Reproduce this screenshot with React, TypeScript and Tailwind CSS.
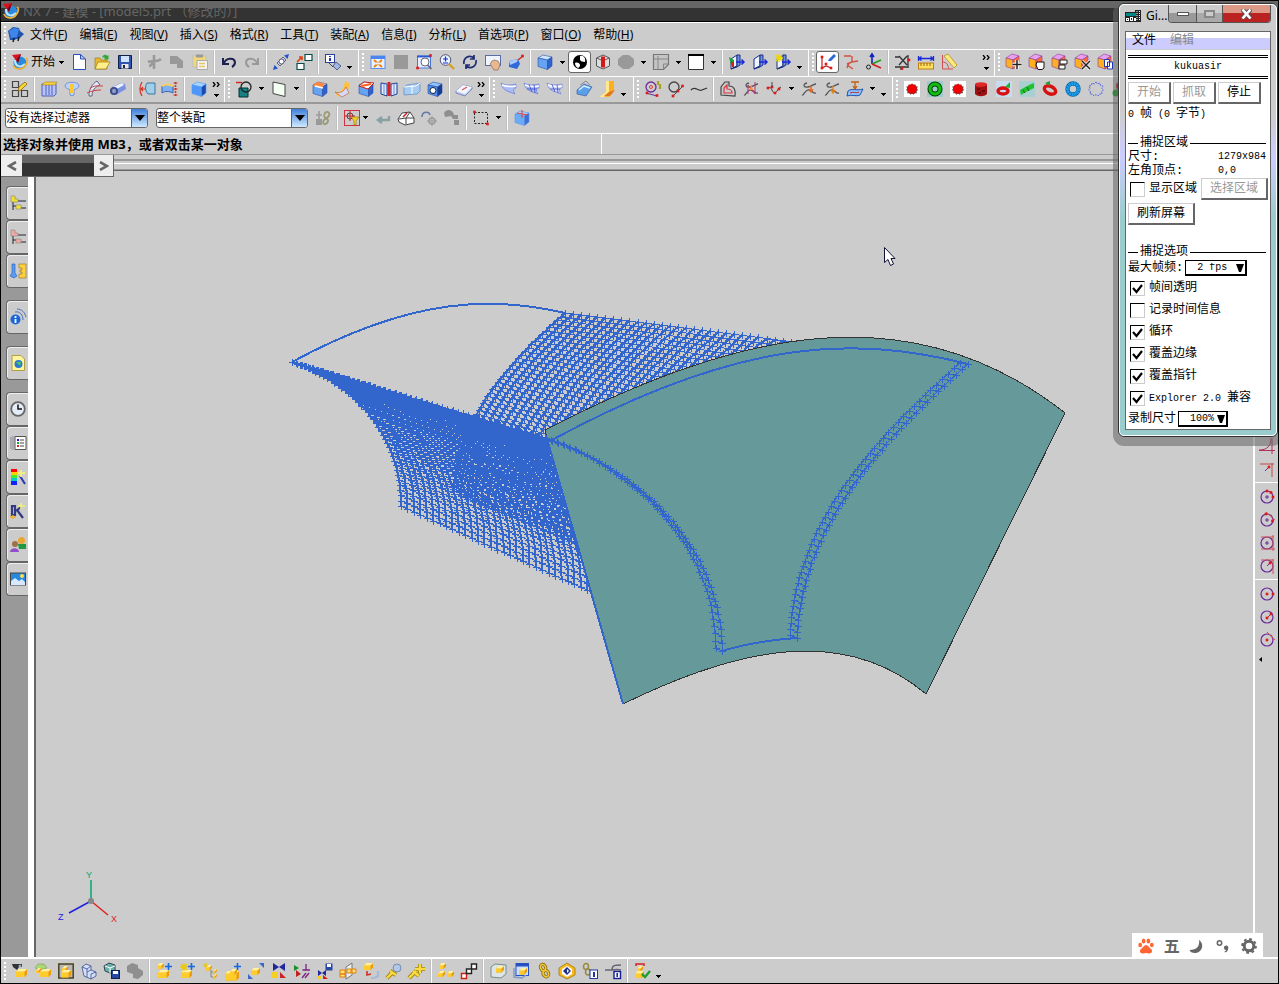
import type { ReactNode } from "react";
import clsx from "clsx";

function Cube({ t = "#cce6ff", l = "#66a3f0", r = "#2f62cc", s = "#2b4fa8" }) {
  return (
    <g stroke={s} strokeWidth=".6" strokeLinejoin="round">
      <path d="M1 4 6 1l9 2-4.500 3z" fill={t} />
      <path d="M1 4l9.500 2v9.500L1 12.500z" fill={l} />
      <path d="M10.500 6 15 3v9l-4.500 3.500z" fill={r} />
    </g>
  );
}

function Gold({ x = 0, y = 0, w = 9 }) {
  const h = w * 0.5;
  return (
    <g transform={`translate(${x} ${y})`}>
      <path d={`M0 2.500 2.500 0H${w}v${h}l-2.500 2.500H0z`} fill="#e89c10" />
      <path d={`M0 2.500h${w - 2.5}v${h}H0z`} fill="#ffcc2c" />
      <path d={`M0 2.500 2.500 0H${w}l-2.500 2.500z`} fill="#fff3a0" />
    </g>
  );
}

function Surface({ a = "#a9bcf5", lines = false }) {
  return (
    <g>
      <path d="M0 2c5 3 10 2 15 1v4c-3 0-3 3-1 6L6 10C4 9 1 7 0 2z" fill={a} stroke="#6a7ad8" strokeWidth=".7" />
      <path d="M1 4c5 2 9 2 14 1" stroke="#fff" strokeWidth="1.500" fill="none" />
      {lines && <path d="M5 3.500l3 7.500M10 3.500l1 8.500M3 8h10" stroke="#3b4bc0" strokeWidth=".8" fill="none" />}
    </g>
  );
}

const plus = <path d="M12.500 0v7M9 3.500h7" stroke="#1668e0" strokeWidth="1.600" />;
const reds = (pts: number[][]) => pts.map(([x, y]) => <rect key={`${x},${y}`} x={x - 1.3} y={y - 1.3} width="2.600" height="2.600" fill="#e01818" />);
const spline = <path d="M6 2C1 3 3 7 7 6s6-3 8-3M1 14c2 1 3-6 7-5s4 4 7 3" fill="none" stroke="#555" strokeWidth="1.300" />;
const moveCube = (
  <g stroke="#8a3a9a" strokeWidth=".6">
    <path d="M0 4 6 0l7 2-6 4z" fill="#e8a0f0" />
    <path d="M0 4l7 2v9l-7-2.500z" fill="#ffb020" />
    <path d="M7 6l6-4v9l-6 4z" fill="#ff6a3c" />
  </g>
);
const door = (
  <g stroke="#1b2f80" strokeWidth="1">
    <path d="M2 5l6-4v11l-6 3z" fill="#eef3ff" />
    <path d="M8 1h3v10l-3 2-6 2 6-3z" fill="#6f93e8" />
    <path d="M7 8h8M12.500 5.500 15 8l-2.500 2.500" stroke="#1a2ad8" strokeWidth="1.500" fill="none" />
  </g>
);
const circle = <circle cx="8" cy="8" r="6" fill="none" stroke="#6a2a9a" strokeWidth="1.200" />;
const star = "M8 1l1.500 2L12 2l.5 2.500L15 5l-1 2.500L15.500 9l-2 1.500.5 2.500-2.500 0L10 15l-2-1.500L6 15l-1.500-2L2 13l.5-2.500L.5 9 2 7.500 1 5l2.500-.5L4 2l2.500 1z";
const starburst = (
  <g>
    <rect width="16" height="16" fill="#fff" />
    <path d={star} fill="#555" transform="translate(1.500 1.500) scale(.82)" />
    <circle cx="8" cy="8" r="4.800" fill="#f00000" />
  </g>
);
const tree = (c: string) => (
  <g>
    <path d="M3 7v8M3 11h4M8 6h8M10 13h6" stroke="#223" strokeWidth="1" />
    <path d="M1 1h4v3h3v3H1z" fill={c} stroke="#887" strokeWidth=".6" />
    <rect x="6" y="10" width="5" height="4" fill={c} stroke="#887" strokeWidth=".6" />
  </g>
);

const icons: Record<string, ReactNode> = {
  nx: (
    <g>
      <circle cx="8" cy="9" r="6.500" fill="#2a8ae0" />
      <path d="M3 6c0 7 6 8 10 4" stroke="#bfe8ff" strokeWidth="2" fill="none" />
      <path d="M1 11c2 5 9 5 12 1s3-7 1-8" stroke="#f0b030" strokeWidth="1.800" fill="none" />
      <path d="M0 1 9 0 6 9z" fill="#d81020" />
      <path d="M9 0 6 9 4.500 5.500z" fill="#7a0010" />
    </g>
  ),
  part: (
    <g>
      <path d="M0 4 5 0l6 1 1 3 4 3-4 4-6 2H2z" fill="#1f55b0" />
      <path d="M1 4l5-3 5 1-2 8-6 1z" fill="#3f86e8" />
      <path d="M6 11l-1 4M11 10l-1 4" stroke="#123" strokeWidth="1.500" />
    </g>
  ),
  fresh: <path d="M2.500.5h7L14.500 5v10.500h-12zM9.500.5V5h5" fill="#fff" stroke="#2a4fc0" />,
  open: (
    <g>
      <path d="M1 4h5l1 2h6v9H1z" fill="#e8b830" stroke="#a07a10" strokeWidth=".7" />
      <path d="M4 8h12l-4 7H1z" fill="#ffef8a" stroke="#a07a10" strokeWidth=".7" />
      <path d="M8 4c1-4 4-4 5-2l1.500-1v4.500H10l1-1.500c-1-1-2-1-3 0z" fill="#30a830" />
    </g>
  ),
  save: (
    <g>
      <path d="M1.500 1.500h13v13h-13z" fill="#2f55b0" stroke="#10204a" />
      <path d="M4 2h8v6H4z" fill="#cfe3ff" />
      <path d="M4.500 10h7v4.500h-7z" fill="#e8e8e8" />
      <path d="M6 11h2v3H6z" fill="#223" />
    </g>
  ),
  cut: <path d="M8 1v14M2 8c4-2 8 1 13-3M3 12c3 0 3-4 5-4" stroke="#999" strokeWidth="2.600" fill="none" />,
  copy: <path d="M1 2h7l6 5v7H8v-4H1z" fill="#999" />,
  paste: (
    <g>
      <rect x="1" y="2" width="13" height="11" fill="#f0d878" stroke="#bba" strokeWidth=".6" />
      <rect x="4" y="0.500" width="7" height="3" fill="#999" />
      <path d="M5 6.500h10.500v9H5z" fill="#f4f4f4" stroke="#aaa" />
      <path d="M7 9.500h6M7 12.500h6" stroke="#e8c860" strokeWidth="1.500" />
    </g>
  ),
  undo: <path d="M2 4v6h6M3 9c2-5 10-6 11-1 0 2-1 4-3 5" fill="none" stroke="#1c2250" strokeWidth="2" />,
  redo: <path d="M14 4v6H8M13 9C11 4 3 3 2 8c0 2 1 4 3 5" fill="none" stroke="#999" strokeWidth="2" />,
  find: (
    <g>
      <path d="M4 9l6-6 3 3-6 6z" fill="#c9d4f0" stroke="#667" />
      <path d="M0 16l1.500-5L5 14.500zM16 0l-5 1.500L14.500 5z" fill="#2550d0" />
      <circle cx="8.500" cy="7.500" r="2.500" fill="#fff" stroke="#557" />
    </g>
  ),
  swap: (
    <g>
      <path d="M9 .5h7v6H9zM1 9.500h7v6H1z" fill="#fff" stroke="#064a4a" strokeWidth="1.200" />
      <path d="M1 8l5-5M3 3h3v3" stroke="#e04010" strokeWidth="1.600" fill="none" />
    </g>
  ),
  info: (
    <g>
      <rect x="0.500" y="0.500" width="9" height="8" fill="#fff" stroke="#2a3f9a" />
      <path d="M5 2v1M5 4v3" stroke="#1020a0" strokeWidth="1.800" />
      <path d="M8 12l3-4 5 4-4 4z" fill="#9fb8e8" stroke="#446" strokeWidth=".8" />
      <path d="M4 9l4 4" stroke="#446" />
    </g>
  ),
  fit: (
    <g>
      <rect x="1" y="2" width="14" height="12.500" fill="#e8f2ff" stroke="#5a90f0" />
      <rect x="1" y="2" width="14" height="3" fill="#4a84f0" />
      <path d="M4 6l8 7M12 6l-8 7" stroke="#f08010" strokeWidth="1.800" />
      <path d="M6 9.500h4" stroke="#e8f2ff" strokeWidth="2" />
    </g>
  ),
  blank: <rect x="1" y="1" width="14" height="14" fill="#999" />,
  zoomArea: (
    <g>
      <rect x="1.500" y="2" width="13" height="12" fill="#e4ecff" stroke="#4a78d8" />
      <path d="M1 2.500h14" stroke="#2858d0" strokeWidth="1.800" />
      <circle cx="9" cy="8" r="4" fill="#fff" stroke="#667" />
      <path d="M11.500 11l4 4" stroke="#667" strokeWidth="1.600" />
      {reds([[1.5, 14], [14.5, 1.5]])}
    </g>
  ),
  zoomIn: (
    <g>
      <circle cx="6.500" cy="6" r="5.300" fill="#e8f4ff" stroke="#557" />
      <path d="M4 5h5M6.500 2.500v5M4 9h5" stroke="#1a2ad8" strokeWidth="1.200" />
      <path d="M10 10l5 5" stroke="#d8a020" strokeWidth="2.400" />
    </g>
  ),
  rotate: <path d="M2 10C1 4 7 0 12 4M14 6c1 6-5 10-10 6M12 1v4H8M4 15v-4h4" fill="none" stroke="#1c2c70" strokeWidth="1.700" />,
  pan: (
    <g>
      <rect x="0.500" y="1.500" width="15" height="10" fill="#f0f4ff" stroke="#5a6ca0" />
      <path d="M7 7l2-1 4 1 2 4-2 5H9L5 10z" fill="#e8b890" stroke="#865" strokeWidth=".7" />
    </g>
  ),
  persp: (
    <g>
      <path d="M1 7l9-2 2 5-3 5-8-2z" fill="#2f6ad8" />
      <path d="M1 7l9-2-1 3-7 3z" fill="#a8c8ff" />
      <path d="M10 6l5-4" stroke="#c03020" strokeWidth="1.400" />
      {reds([[14.5, 2]])}
    </g>
  ),
  cube: <Cube />,
  shade: (
    <g>
      <circle cx="8" cy="8" r="7" fill="#000" />
      <path d="M8 2c4-1 6 3 5 6-3 0-4-1-5-2zM3 9c2-1 5 0 5 2s-1 2-2 3C4 13 3 11 3 9z" fill="#fff" />
    </g>
  ),
  section: (
    <g>
      <path d="M1.500 4 8 1l6.500 3v8L8 15l-6.500-3z" fill="#ddd" stroke="#555" />
      <path d="M2 4l6 3 6-3" fill="none" stroke="#555" />
      <rect x="6" y="2.500" width="4" height="11" fill="#d81818" />
    </g>
  ),
  hex: <path d="M0 5l5-4h6l5 4v6l-5 4H5l-5-4z" fill="#999" />,
  layer: (
    <g>
      <path d="M.5.5h15v10l-5 5H.5z" fill="#c4c4c4" stroke="#777" strokeWidth="1.200" />
      <path d="M5 2v13M1 5h14M10.500 15v-5h5" stroke="#888" fill="none" />
    </g>
  ),
  white: <g><path d="M.5.5h15v15H.5z" fill="#fff" stroke="#333" /><path d="M0 1h16" stroke="#000" strokeWidth="2" /></g>,
  door1: <g>{door}<path d="M0 3l5 3v6l-3-1z" fill="#18a030" /><path d="M2 8h3v5H3z" fill="#d02020" /></g>,
  door2: door,
  door3: <g>{door}<path d="M4 0v8M0 4h8M1 1l6 6M7 1 1 7" stroke="#e8d800" strokeWidth="1.300" /></g>,
  csys1: (
    <g>
      <path d="M2 3v11l4-2 5 2" stroke="#c02020" fill="none" strokeWidth="1.200" />
      <path d="M8 7l1-2 5-5 2 2-5 5z" fill="#2a68d8" />
      {reds([[2, 3], [2, 14], [11, 14], [6, 10]])}
    </g>
  ),
  csys2: <path d="M9 2v6l6-1M9 8l-5 2M1 2h7M6 9l-2 5M4 11l6 4" stroke="#d05040" fill="none" strokeWidth="1.400" />,
  csys3: (
    <g>
      <path d="M6 0v10M4 3l2-3 2 3" stroke="#1020c0" strokeWidth="1.600" fill="none" />
      <path d="M6 10l9-4" stroke="#20a020" strokeWidth="1.800" />
      <path d="M6 10l9 4" stroke="#d02020" strokeWidth="1.800" />
      <circle cx="2.500" cy="13" r="2" fill="none" stroke="#222" />
    </g>
  ),
  trimX: (
    <g>
      <path d="M4 2l8 9M12 2 4 11M0 13h14M6 13v3M13 1v11M0 3h4" stroke="#333" fill="none" strokeWidth="1.300" />
      {reds([[14, 6], [7, 14.5]])}
    </g>
  ),
  ruler: (
    <g>
      <path d="M.5 2v5M15.500 2v5M1 4.500h14M3.500 2.500l-2.500 2 2.500 2M12.500 2.500l2.500 2-2.500 2" stroke="#1a2ad8" strokeWidth="1.300" fill="none" />
      <rect x="0.500" y="9" width="15" height="6" fill="#ffe060" stroke="#c08010" />
      <path d="M3 9v3M6 9v3M9 9v3M12 9v3" stroke="#a06010" />
    </g>
  ),
  angle: (
    <g>
      <path d="M1.500 1v14H12M1.500 8c4 0 6 3 6 7" stroke="#d05050" fill="none" />
      <path d="M3 2l4-2 9 11-3 3z" fill="#ffe878" stroke="#a89030" strokeWidth=".8" />
    </g>
  ),
  mv1: <g>{moveCube}<path d="M11 6v9M6.500 10.500h9" stroke="#fff" strokeWidth="3.500" /><path d="M11 6v9M6.500 10.500h9" stroke="#222" strokeWidth="1.500" /></g>,
  mv2: <g>{moveCube}<path d="M8 8h7v6l-2 1.500H9L7 11z" fill="#fff" stroke="#111" /></g>,
  mv3: <g>{moveCube}<path d="M8 6h7v4H8zM7 11h6v4H7z" fill="#fff" stroke="#222" /></g>,
  mv4: <g>{moveCube}<path d="M7 7l8 8M15 7l-8 8" stroke="#fff" strokeWidth="3" /><path d="M7 7l8 8M15 7l-8 8" stroke="#222" strokeWidth="1.500" /></g>,
  mv5: <g>{moveCube}<path d="M6.500 5.500h5v7h-5zM9.500 8h5v7h-5z" fill="#fff" stroke="#2038b0" /></g>,

  sketch: (
    <g>
      <path d="M.5.5h6v6h-6zM.5 9.500h6v6h-6zM9.500 9.500h6v6h-6z" fill="none" stroke="#444" strokeWidth="1.200" />
      <path d="M6 10l1-4 6-5 2 2-6 6z" fill="#f8d830" stroke="#805000" strokeWidth=".7" />
    </g>
  ),
  extrude: (
    <g>
      <path d="M1 3h14v10l-2 2H1z" fill="#b8c4f8" stroke="#4f60b8" />
      <path d="M5 4v10M8 4v10M11 4v10" stroke="#4f60b8" />
      <path d="M1 4l3-3h12l-2 3z" fill="#f6d040" stroke="#a08020" strokeWidth=".6" />
    </g>
  ),
  revolve: (
    <g>
      <path d="M1 5c0-5 14-5 14 0 0 2-4 3-5 4v5c-1 1-3 1-4 0V9C5 8 1 7 1 5z" fill="#b8d4ff" stroke="#7a90d8" />
      <path d="M6 3h4v9H6z" fill="#ffc830" />
    </g>
  ),
  sweep: (
    <g>
      <path d="M2 15C2 8 5 3 10 0l3 4c-5 2-8 5-8 11z" fill="#dfe8ff" stroke="#667" />
      <path d="M3 8c3-4 8-3 13-3M0 12c4-2 9-3 14-3" stroke="#d04040" fill="none" />
    </g>
  ),
  tube: (
    <g>
      <path d="M2 6l9-4 4 1 1 5-10 6z" fill="#7a92e0" />
      <path d="M3 6l9-4 2 2-9 5z" fill="#eef2ff" />
      <ellipse cx="4" cy="10" rx="4" ry="4" fill="#3c4c88" />
      <ellipse cx="4" cy="10" rx="2" ry="2.300" fill="#8f9fd0" />
    </g>
  ),
  offset1: (
    <g>
      <path d="M8 2h8v11H9c-3-3-3-8-1-11z" fill="#9fd0e8" stroke="#4070a0" />
      <path d="M3 1c-3 5-3 9 0 14M1 8h6M4 6 2 8l2 2" stroke="#d83020" strokeWidth="1.200" fill="none" />
    </g>
  ),
  offset2: (
    <g>
      <path d="M0 5c3-2 7-2 11 0v7c-4-2-8-2-11 0z" fill="#7fb0f0" stroke="#3a60b0" />
      <path d="M0 4c3-2 7-2 11 0v2c-4-2-8-2-11 0z" fill="#ffd060" />
      <path d="M13.500 1v14" stroke="#d83020" strokeWidth="1.500" strokeDasharray="2 1" />
      <path d="M11.500 2h4M11.500 8h4M11.500 14h4" stroke="#d83020" />
    </g>
  ),
  solid: <Cube t="#a8d4ff" l="#4f98f8" r="#184ab0" s="#4f98f8" />,
  datum: (
    <g>
      <path d="M3 7h9v9H3z" fill="#188080" stroke="#033" />
      <circle cx="10" cy="6" r="5" fill="none" stroke="#222" strokeWidth="1.300" />
      <path d="M0 1.500h6" stroke="#d02020" strokeWidth="1.400" />
    </g>
  ),
  plane: <path d="M2 1l12 2.500v12L2 12.500z" fill="#f4fff4" stroke="#444" />,
  edgeBlend: <g><Cube /><path d="M1 5c1-3 3-4 5-4l9 2c-3 0-4 1-4.500 4z" fill="#ff8840" /><path d="M3 5l8 2" stroke="#fff" strokeWidth="1.400" /></g>,
  draft: (
    <g>
      <path d="M0 11c6 2 9-4 10-11l4 2c1 9-5 14-12 13z" fill="#ffc040" />
      <path d="M0 11c6 2 9-1 11-5l3 6-7 4z" fill="#d8d8ff" stroke="#b06020" strokeWidth=".6" />
    </g>
  ),
  chamfer: <g><Cube /><path d="M1 5l5-4 10 1-6 6z" fill="#fff" stroke="#c02020" /><path d="M3 5l10-2" stroke="#ff6020" strokeWidth="1.800" /></g>,
  book: (
    <g>
      <path d="M0 2l6 1v12l-6-2zM16 2l-6 1v12l6-2z" fill="#dfeaff" stroke="#1a3a9a" />
      <path d="M3 2.500v11M13 2.500v11" stroke="#6a8ad8" />
      <path d="M6.500 1h3v14h-3z" fill="#d82020" />
    </g>
  ),
  sew: <g><path d="M0 6l3-2 13-2v8l-3 3-13 1z" fill="#a4ccf4" stroke="#6a90c0" strokeWidth=".8" /><path d="M8 4v9M0 6l12-1 4-3" stroke="#fff" fill="none" /></g>,
  hole: <g><Cube t="#8fc4ff" l="#4f90f0" r="#153a90" /><circle cx="6" cy="9.500" r="3" fill="#fff" stroke="#123" /></g>,
  sheet: (
    <g>
      <path d="M0 10l7-6 9 2-7 7z" fill="#fff" stroke="#7a88c0" />
      <path d="M0 10v2l9 3 7-7V6" stroke="#7a88c0" fill="#c4ccec" />
      <path d="M0 10l9 3 7-7-9-2z" fill="#f4f6ff" />
      <path d="M6 9l5-3" stroke="#d06060" strokeWidth="1.400" />
    </g>
  ),
  surf1: <Surface />,
  surf2: <Surface lines />,
  surf3: <Surface a="#d4daff" lines />,
  surf4: (
    <g>
      <path d="M1 9 8 3l8 3-6 9-9-2z" fill="#5aa0e8" stroke="#2a50a0" strokeWidth=".6" />
      <path d="M4 4l6-4 4 4" stroke="#889" fill="none" />
      <path d="M3 9l5-4 6 2" stroke="#d8f0ff" strokeWidth="1.500" fill="none" />
    </g>
  ),
  bend: (
    <g>
      <path d="M8 0h7v10l-5 6H0l8-5z" fill="#ffae20" />
      <path d="M7 0h3v11l-5 5H0l7-5z" fill="#ffe890" />
      <path d="M10 11l6-2-5 6H5z" fill="#e07818" />
    </g>
  ),
  cam1: (
    <g>
      <circle cx="6" cy="6" r="5" fill="none" stroke="#6a2a9a" strokeWidth="1.300" />
      <circle cx="6" cy="6" r="1.500" fill="none" stroke="#e04040" />
      <path d="M13 0v4M15 3v5" stroke="#b0a020" strokeWidth="2.200" />
      <path d="M1 12l11 3" stroke="#6a2a9a" />
      {reds([[2, 12], [12, 14.5]])}
    </g>
  ),
  cam2: (
    <g>
      <circle cx="6" cy="6" r="5" fill="none" stroke="#444" strokeWidth="1.300" />
      <path d="M5 15l9-9" stroke="#444" />
      {reds([[5, 15], [14.5, 5], [10, 10]])}
    </g>
  ),
  curve: <path d="M0 9c4-5 7 2 11 0 2-1 3-1 5-2" fill="none" stroke="#333" strokeWidth="1.300" />,
  offsetCurve: (
    <g fill="none">
      <path d="M1 14V6l4-5h4v4c5 0 7 4 6 10z" stroke="#444" strokeWidth="1.200" />
      <path d="M4 12V7l3-3v4c4 0 5 1 5 4z" stroke="#e03040" strokeWidth="1.200" />
    </g>
  ),
  spl1: <g>{spline}<path d="M5 4l7 9M12 1v12M5 4v9" stroke="#c03080" /><path d="M8 3l2 6H7z" fill="#ff9020" /></g>,
  spl2: <g><path d="M1 7c2-1 4-1 5 2s3 4 5 1 2-3 4-4" stroke="#444" fill="none" />{reds([[2, 7], [6, 6], [9, 12], [13, 8]])}<path d="M6 1v5" stroke="#444" /></g>,
  spl3: <g>{spline}<path d="M10 5v5M8 8l2 3 2-3" stroke="#f06010" fill="none" strokeWidth="1.300" /></g>,
  spl4: <g>{spline}<path d="M9 5v6M7 9l2 3 2-3" stroke="#f08010" fill="none" strokeWidth="1.300" /></g>,
  project: (
    <g>
      <path d="M4 1h8M8 1v6M6 5l2 3 2-3" stroke="#c06010" fill="none" strokeWidth="1.300" />
      <path d="M1 10c4-3 8 0 15-2l-3 6c-4 2-8-1-13 1z" fill="#8ac4ff" stroke="#1f50b0" />
      <path d="M3 12c3-2 6 1 9-1" stroke="#d02020" fill="none" />
    </g>
  ),
  burst: starburst,
  ring: (
    <g>
      <rect width="16" height="16" fill="#9ccaca" />
      <circle cx="8" cy="8" r="5" fill="none" stroke="#064006" strokeWidth="5" />
      <circle cx="8" cy="8" r="5" fill="none" stroke="#10c010" strokeWidth="3" />
    </g>
  ),
  drum: (
    <g>
      <path d="M2 3v10c3 3 9 3 12 0V3z" fill="#a01010" />
      <ellipse cx="8" cy="3.500" rx="6" ry="2.300" fill="#e02828" />
      <path d="M4 8h3M9 10h3M5 12h3" stroke="#300" />
    </g>
  ),
  torus1: <g><rect width="16" height="16" fill="#c8dcf0" /><ellipse cx="7" cy="10" rx="5" ry="3" fill="none" stroke="#d81010" strokeWidth="3.400" /><path d="M9 6l5-5v6z" fill="#20b030" /></g>,
  worm: <g><rect width="16" height="16" fill="#a8d0d0" /><path d="M1 9l9-5 5-2v5l-8 4-5 3z" fill="#20c030" /><path d="M4 9l2 3M8 6l2 4" stroke="#087010" /></g>,
  torus2: <g><ellipse cx="8" cy="9" rx="6" ry="3.700" fill="none" stroke="#d81010" strokeWidth="3.400" transform="rotate(25 8 9)" /><path d="M3 2l5-2v5z" fill="#20a030" /></g>,
  gearBlue: <g><circle cx="8" cy="8" r="5.500" fill="none" stroke="#0868b0" strokeWidth="4.400" /><circle cx="8" cy="8" r="5.500" fill="none" stroke="#20a0e8" strokeWidth="3" strokeDasharray="2 .6" /></g>,
  gearLine: <path d={star} fill="none" stroke="#5a6ae0" strokeDasharray="2 1" />,
  balls: <g><circle cx="9" cy="5" r="4" fill="#d01818" /><circle cx="5" cy="12" r="3.500" fill="#18a028" /><circle cx="12" cy="11" r="3" fill="#222" /></g>,

  ghost: <g fill="#999"><path d="M1 9h6v6H1z" /><path d="M4 1v8M1 5h6" stroke="#999" strokeWidth="1.500" /><path d="M10 3c3-3 6 1 3 4s-5-1-3-4zM9 10c2-3 6 0 3 3s-5 0-3-3z" fill="none" stroke="#9a9a78" strokeWidth="1.800" /></g>,
  snap: (
    <g>
      <rect x="0.500" y="0.500" width="15" height="15" fill="none" stroke="#d03040" />
      <circle cx="6" cy="6" r="3" fill="none" stroke="#444" />
      <path d="M6 1v10M1 6h10" stroke="#c02020" />
      <path d="M7 7h8l-3 4v4h-2v-4z" fill="#f4d020" stroke="#907010" strokeWidth=".6" />
    </g>
  ),
  back: <path d="M14 6v4H4M7 7l-4 3 4 3" fill="none" stroke="#8aa0a0" strokeWidth="2.400" />,
  house: (
    <g>
      <path d="M0 9l4-6 8-1 4 6v5l-9 2-6-3z" fill="#fff" stroke="#444" />
      <path d="M8 8l8 0M8 8v6M1 9l7-1 4-6" stroke="#444" fill="none" />
      <path d="M5 7l4-4" stroke="#d02020" strokeWidth="1.600" />
    </g>
  ),
  rot1: <g stroke="#999" fill="none"><path d="M1 7c0-6 7-6 8-2" stroke="#667aa8" strokeWidth="1.600" /><circle cx="11" cy="11" r="3" strokeWidth="1.500" /><path d="M11 6v10M6 11h10" /></g>,
  rot2: <g fill="#8f8f8f"><path d="M0 3c3-5 9-3 10 2h4v4H9L7 6 1 7z" /><path d="M10 10h5v5h-5z" /></g>,
  marquee: <g><rect x="1.500" y="2.500" width="13" height="11" fill="none" stroke="#222" strokeDasharray="2 1.500" />{reds([[1.5, 2], [14.5, 14]])}</g>,
  block: <g><Cube t="#a8d4ff" l="#6aacf8" r="#3a70d8" s="#5a90e8" /><path d="M8 0v8M3 3l11 2" stroke="#e04040" /></g>,

  a1: <g><Gold x={4} y={6} w={11} /><path d="M0 1h10v3H7L5 7 1 4z" fill="#333" /><circle cx="8" cy="3" r="1.500" fill="#9ab" /></g>,
  a2: <g><Gold x={5} y={6} w={11} /><path d="M0 5l3-4h6l3 4-8 2z" fill="#a8d878" stroke="#7a8a40" strokeWidth=".5" /><Gold x={1} y={5} w={5} /></g>,
  a3: <g><rect x="0.800" y="1" width="14.400" height="14" fill="#b8b8b8" stroke="#4a4220" strokeWidth="1.500" /><Gold x={4} y={3} w={6} /><Gold x={3} y={7} w={10} /></g>,
  a4: <g fill="#d4e0f8" stroke="#4a5a98" strokeWidth=".9"><path d="M1 4l4-3 5 2v4l5 2v4l-5 3-7-3z" /><path d="M1 4l5 2 4-3M6 6v8M10 7l-4 2M10 16v-5l5-2" fill="none" /></g>,
  a5: <g><path d="M0 3l5-3 6 2v6l-5 2-5-2z" fill="#6ab0a8" stroke="#345" /><path d="M1 3l5 2 5-2M6 5v5" stroke="#fff" fill="none" /><rect x="7.500" y="7.500" width="8" height="8" fill="#2447a0" stroke="#124" /><path d="M9 8h5v3H9z" fill="#fff" /></g>,
  a6: <path d="M0 3l5-3 6 2v3l5 3v4l-5 4-5-1v-4L0 9z" fill="#8f8f8f" />,
  b1: <g><Gold x={1} y={0} w={7} /><Gold x={2} y={7} w={11} />{plus}</g>,
  b2: <g><Gold x={2} y={7} w={11} /><path d="M5 0v8M1 4h8M2 1l6 6M8 1 2 7" stroke="#e8c810" strokeWidth="1.300" />{plus}</g>,
  b3: <g><path d="M4 0v6M1 3h6M2 1l4 4" stroke="#e8c810" strokeWidth="1.300" /><Gold x={4} y={2} w={6} /><path d="M9 7v7M9 9h3M9 14h3" stroke="#887" /><Gold x={11} y={6} w={4} /><Gold x={11} y={11} w={4} /></g>,
  b4: <g><Gold x={0} y={8} w={14} /><Gold x={5} y={6} w={7} />{plus}</g>,
  b5: <g><Gold x={3} y={5} w={9} /><path d="M0 16v-5l5 5zM16 0v5L11 0z" fill="#3868c8" /></g>,
  b6: <g><path d="M2 0l6 4-6 4zM14 0L8 4l6 4z" fill="#2028a0" /><rect x="0.500" y="9" width="6" height="6" fill="#f4d020" /><path d="M9 9l6 6H9z" fill="#d02020" /></g>,
  b7: <g><path d="M0 2l5 3-5 3z" fill="#18902a" /><path d="M2 7l5 4-5 3z" fill="#c02020" /><path d="M12 1v6M8.500 7H16M8 15l4-5M11 15l4-5" stroke="#802080" strokeWidth="1.300" /></g>,
  b8: <g><path d="M1 7l4 3-4 3zM9 7l-4 3 4 3z" fill="#2028a0" /><path d="M0 13h4v3H0z" fill="#f4d020" /><path d="M6 12l5 4H6z" fill="#d02020" /><path d="M8.500.5h7v7h-7z" fill="#2447a0" /><path d="M10 1h4v3h-4z" fill="#fff" /></g>,
  b9: <g><path d="M6 4l6-4v12l-6 4z" fill="#eee" stroke="#777" /><path d="M0 7h5v4H0zM7 6h4v4H7zM12 6h4v4h-4zM0 11h5v3H0z" fill="#ffe070" stroke="#e08010" /></g>,
  b10: <g><Gold x={1} y={0} w={9} /><path d="M4 8v4l4-1" stroke="#d03020" strokeWidth="1.600" fill="none" /><path d="M15 8v5l-4 2H8" fill="none" stroke="#a8b8d8" strokeWidth="2.200" /></g>,
  b11: <g><circle cx="11" cy="5" r="4" fill="#b0c8e8" stroke="#7a8ab0" /><path d="M1 15l6-6M4 8l6 4" stroke="#a08010" strokeWidth="4" /><path d="M1 15l6-6M4 8l6 4" stroke="#f8dc40" strokeWidth="2.400" /></g>,
  b12: <g><path d="M0 15l7-7M4 8l6 5M11 1v9M6 6h10" stroke="#a08010" strokeWidth="4" /><path d="M0 15l7-7M4 8l6 5M11 1v9M6 6h10" stroke="#f8dc40" strokeWidth="2.400" /></g>,
  c1: <g><Gold x={1} y={0} w={7} /><Gold x={0} y={8} w={7} /><Gold x={9} y={8} w={7} /></g>,
  c2: <g fill="#fff" strokeWidth="1.400"><path d="M.5 10.500h5v5h-5z" stroke="#d02010" /><path d="M5.500 6h5v4.500h-5zM10.500 1h5v5h-5z" stroke="#222" /></g>,
  d1: <g><path d="M1 4l4-3 11 1v9l-5 4-10-1z" fill="#dde4e8" stroke="#7a8a8a" /><Gold x={6} y={3} w={8} /></g>,
  d2: <g><rect x="3" y="0.500" width="12.500" height="12" fill="#cfe0ff" stroke="#2850c0" /><path d="M3 .5h12.500v3H3z" fill="#2850c0" /><path d="M1 5v9l8 1 4-3" stroke="#7a9ad0" fill="none" strokeWidth="1.500" /><Gold x={6} y={5} w={8} /></g>,
  d3: <g fill="none"><path d="M5 2c3-2 6 2 4 5s-6-2-4-5zM8 8c3-2 6 2 4 5s-7-2-4-5z" stroke="#806008" strokeWidth="3" /><path d="M5 2c3-2 6 2 4 5s-6-2-4-5zM8 8c3-2 6 2 4 5s-7-2-4-5z" stroke="#f0c830" strokeWidth="1.600" /></g>,
  d4: <g><path d="M0 5l8-5 8 5v7l-8 4-8-4z" fill="#f8b820" stroke="#a07810" strokeWidth=".8" /><path d="M3 6l5-3 5 3v5l-5 3-5-3z" fill="#fff" /><path d="M8 4l4 4-4 4-4-4z" fill="#203088" /><path d="M8 6l2 2-2 2z" fill="#fff" /></g>,
  d5: <g><g fill="none" stroke="#9a8a40" strokeWidth="1.500"><ellipse cx="4" cy="3.500" rx="2.500" ry="3" /><ellipse cx="6" cy="9" rx="2.500" ry="3" /></g><rect x="8" y="7" width="7.500" height="8.500" fill="#fff" stroke="#2038a0" /><path d="M12 9v5" stroke="#2038a0" strokeWidth="2" /></g>,
  d6: <g><path d="M0 7h7M7 7c0-5 3-5 9-5M7 7c2 0 5-1 9 0" stroke="#667" strokeWidth="1.500" fill="none" /><rect x="9" y="8.500" width="6.500" height="7" fill="#fff" stroke="#101c90" strokeWidth="1.400" /><path d="M12.200 10v4" stroke="#101c90" strokeWidth="1.500" /></g>,
  e1: <g><path d="M2 3V1h8v2" stroke="#d82020" strokeWidth="1.500" fill="none" /><Gold x={3} y={3} w={6} /><Gold x={1} y={8} w={9} /><path d="M8 11l3 3 5-6" stroke="#18a028" strokeWidth="2.200" fill="none" /></g>,

  t1: tree("#f4e030"),
  t2: tree("#f0a8a8"),
  t3: <g><path d="M2 1h3v9l2 3-3 2-4-2 2-3z" fill="#5a9cf4" stroke="#2458b0" strokeWidth=".6" /><path d="M9 1h7v14H9v-4h3V9h-2V7h2V5L9 5z" fill="#ffd040" stroke="#a07810" strokeWidth=".7" /></g>,
  t4: <g><circle cx="5.500" cy="10.500" r="5" fill="#1868d8" /><path d="M5.500 7v2M5.500 10v4" stroke="#fff" strokeWidth="1.800" /><path d="M5 3c5-1 8 3 8 8M7 0c5 0 8 4 9 8" fill="none" stroke="#4a70c0" /></g>,
  t5: <g><path d="M2 .5h9l3.500 3.500v11.500H2z" fill="#fff4a0" stroke="#b0a040" /><circle cx="8.500" cy="9" r="4" fill="#2878d0" /><path d="M6 7h5l-1 4z" fill="#50c858" /></g>,
  t6: <g><circle cx="8" cy="8" r="6.800" fill="#e4ecf8" stroke="#666" strokeWidth="1.800" /><path d="M8 3.500V8h4" stroke="#111" strokeWidth="1.500" fill="none" /></g>,
  t7: <g><path d="M1 2v12M3 1v14" stroke="#889" /><path d="M5 1.500h11v13H5z" fill="#fff" stroke="#555" /><path d="M10 5h4M10 8h4M10 11h4" stroke="#444" /><path d="M7 4h2v2H7z" fill="#30c" /><path d="M7 7h2v2H7z" fill="#1a3" /><path d="M7 10h2v2H7z" fill="#d22" /></g>,
  t8: <g><path d="M1 0h6v3H1z" fill="#f00" /><path d="M1 3h6v3H1z" fill="#fc0" /><path d="M1 6h6v3H1z" fill="#4e2" /><path d="M1 9h6v3H1z" fill="#0cc" /><path d="M1 12h6v4H1z" fill="#12f" /><path d="M10 7l5 8" stroke="#2a38b0" strokeWidth="2" /><path d="M8 4h7M11 1v7" stroke="#f4f080" strokeWidth="1.800" /></g>,
  t9: <g><path d="M2 3h3v9H2zM6 8l5-4M7 7l6 8" fill="none" stroke="#333a80" strokeWidth="2.200" /><path d="M8 3h7M11 0v6" stroke="#f4f080" strokeWidth="1.600" /><path d="M0 14h6M3 12v4" stroke="#f0b030" strokeWidth="1.500" /></g>,
  t10: <g><circle cx="11.500" cy="3.500" r="3.500" fill="#e8a830" /><path d="M8 7h8v5H9z" fill="#209a40" /><circle cx="5" cy="7" r="3" fill="#a07048" /><path d="M0 15c0-5 9-5 9 0z" fill="#9050c8" /></g>,
  t11: <g><rect x="0.500" y="2" width="15" height="12" fill="#2888e0" stroke="#444" /><path d="M1 10l4-3 4 3 3-2 3 3v3H1z" fill="#d8e8ff" /><circle cx="12" cy="5" r="2" fill="#ffe040" /></g>,

  r1: <path d="M0 12C8 12 12 8 12 0M13 0v16M0 12.500h16" fill="none" stroke="#b03060" />,
  r2: <g><path d="M13 2v14M1 3h14" stroke="#c04848" /><path d="M6 10l5-5" stroke="#6a2a9a" />{reds([[10, 6]])}</g>,
  r3: <g>{circle}<path d="M8 6v4M6 8h4" stroke="#6a2a9a" />{reds([[8, 2], [12, 3.5], [14, 8]])}</g>,
  r4: <g>{circle}<path d="M8 6v4M6 8h4" stroke="#6a2a9a" /><path d="M7 0l9 8" stroke="#d05050" />{reds([[7, 2], [13.5, 9]])}</g>,
  r5: <g>{circle}<path d="M8 6v4M6 8h4" stroke="#6a2a9a" /><path d="M14 0v16M2 14h14M2 2h13" stroke="#d05050" /></g>,
  r6: <g>{circle}<path d="M14 1v15M2 2h13" stroke="#d05050" /><path d="M8 8l4-4" stroke="#6a2a9a" />{reds([[11, 5]])}</g>,
  r7: <g>{circle}{reds([[8, 8], [14, 8]])}</g>,
  r8: <g>{circle}<path d="M8 9l4-4" stroke="#d02020" />{reds([[8, 9], [12, 5]])}</g>,
  r9: <g>{circle}<path d="M8 0l8 8" stroke="#d05050" />{reds([[8, 8]])}</g>,
};

function Icon({ name }: { name: string }) {
  return (
    <svg viewBox="0 0 16 16" className="size-4 shrink-0 overflow-visible">
      {icons[name]}
    </svg>
  );
}

function Caret({ className }: { className?: string }) {
  return (
    <svg viewBox="0 0 5 3" className={clsx("h-[3px] w-[5px] shrink-0", className)} shapeRendering="crispEdges">
      <path d="M0 0h5L2.500 3z" />
    </svg>
  );
}

// "|" separator, "v" "," carets, "." caret of an overflow menu, ">" double chevron, "*name" pressed button
function Tool({ item }: { item: string }) {
  if (item === "|") return <span className="mx-[2px] h-[24px] w-[2px] shrink-0 border-r border-white bg-[#c0c0c0]" />;
  if (item === "v") return <button className="flex w-3 shrink-0 justify-center"><Caret /></button>;
  if (item === ",") return <button className="flex w-2 shrink-0 justify-start"><Caret /></button>;
  if (item === ".") return <button className="flex h-[14px] w-[11px] shrink-0 items-end justify-center"><Caret /></button>;
  if (item === ">")
    return (
      <button className="flex h-5 w-3 shrink-0 flex-col items-center justify-between pb-[2px] pt-[3px]">
        <svg viewBox="0 0 8 5" className="h-[5px] w-2" fill="none" stroke="#000" strokeWidth="1.300">
          <path d="M1 0l2 2.500L1 5M5 0l2 2.500L5 5" />
        </svg>
        <Caret />
      </button>
    );
  if (item === "start")
    return (
      <button className="flex shrink-0 items-center">
        <span className="flex w-[23px] justify-center"><Icon name="nx" /></span>
        开始
      </button>
    );
  const on = item[0] === "*";
  return (
    <button
      className={clsx(
        "flex h-[22px] w-[23px] shrink-0 items-center justify-center",
        on && "rounded-[3px] border border-[#666] bg-white",
      )}
    >
      <Icon name={on ? item.slice(1) : item} />
    </button>
  );
}

function Grip() {
  return <span className="ml-[3px] mr-[1px] h-[18px] w-[3px] shrink-0 border-l-2 border-dotted border-white" />;
}

function Group({ items, className }: { items: string; className?: string }) {
  return (
    <div className={clsx("flex shrink-0 items-center", className)}>
      <Grip />
      {items.split(" ").map((item, i) => (
        <Tool key={i} item={item} />
      ))}
    </div>
  );
}

const menus = [
  ["文件", "F"], ["编辑", "E"], ["视图", "V"], ["插入", "S"], ["格式", "R"], ["工具", "T"],
  ["装配", "A"], ["信息", "I"], ["分析", "L"], ["首选项", "P"], ["窗口", "O"], ["帮助", "H"],
];

function Combo({ value, label, className }: { value: string; label: string; className: string }) {
  return (
    <div className={clsx("relative h-5 shrink-0", className)}>
      <select
        aria-label={label}
        className="h-full w-full appearance-none rounded-[3px] border border-[#666] bg-white text-xs text-black"
      >
        <option>{value}</option>
      </select>
      <span className="pointer-events-none absolute inset-y-[1px] right-[1px] flex w-4 items-center justify-center rounded-r-[2px] border-l border-[#3366cc] bg-linear-to-b from-[#3f7fd8] to-[#cfeaff]">
        <svg viewBox="0 0 10 6" className="h-[6px] w-[10px]"><path d="M0 0h10L5 6z" /></svg>
      </span>
    </div>
  );
}

type P = [number, number];
type Curve = [P, P, P, P];

function bez([a, b, c, d]: Curve, t: number): P {
  const u = 1 - t;
  const f = (i: 0 | 1) => u * u * u * a[i] + 3 * u * u * t * b[i] + 3 * u * t * t * c[i] + t * t * t * d[i];
  return [f(0), f(1)];
}

// ruled patch between two curves, a cross marker on every grid point
function patch(from: Curve, to: Curve, rows: number, cols: number, first = 0) {
  let marks = "";
  let lines = "";
  let rules = "";
  for (let i = 0; i <= rows; i++) {
    const a = bez(from, i / rows);
    const b = bez(to, i / rows);
    const k = first / cols;
    rules += `M${a[0] + (b[0] - a[0]) * k} ${a[1] + (b[1] - a[1]) * k}L${b[0]} ${b[1]}`;
  }
  for (let j = first; j <= cols; j++) {
    const k = j / cols;
    for (let i = 0; i <= rows; i++) {
      const a = bez(from, i / rows);
      const b = bez(to, i / rows);
      const x = Math.round(a[0] + (b[0] - a[0]) * k);
      const y = Math.round(a[1] + (b[1] - a[1]) * k);
      marks += `M${x - 3} ${y}.5h7M${x}.5 ${y - 3}v7`;
      lines += `${i ? "L" : "M"}${x} ${y}`;
    }
  }
  return { marks, lines, rules };
}

const leftFar: Curve = [[292, 362], [347, 380], [402, 430], [401, 506]];
const leftNear: Curve = [[551, 440], [635, 468], [722, 545], [722, 651]];
const rightFar: Curve = [[565, 313], [498, 372], [456, 426], [454, 491]];
const rightNear: Curve = [[968, 364], [865, 455], [800, 538], [797, 638]];

const left = patch(leftFar, leftNear, 42, 50);
const right = patch(rightFar, rightNear, 50, 50);
const leftBand = patch(leftFar, leftNear, 42, 50, 49);
const rightBand = patch(rightFar, rightNear, 50, 50, 49);

function Model() {
  return (
    <svg viewBox="36 177 1217 779" className="absolute left-0 top-0 h-[779px] w-[1217px]" fill="none" shapeRendering="crispEdges">
      <g stroke="#3366cc">
        <path d="M292 362C412 297 492 296 565 313" strokeWidth="2" />
        <path d={right.marks} />
        <path d={right.rules} />
        <path d={right.lines} strokeWidth="2" />
        <path d={left.marks} />
        <path d={left.rules} />
        <path d={left.lines} strokeWidth="2" />
      </g>
      <path
        d="M545 430C735 332 909 290 1065 413L926 694C842 623 733 650 623 704z"
        fill="#669999"
        stroke="#333"
      />
      <g stroke="#3366cc">
        <path d="M546 435 623 704" strokeWidth="2" />
        <path d="M552 440C742 337 856 336 968 364" strokeWidth="2" />
        <path d="M722 651Q755 641 796 638" strokeWidth="2" />
        <path d={leftBand.marks + rightBand.marks} />
        <path d={leftBand.lines + rightBand.lines + leftBand.rules + rightBand.rules} strokeWidth="1" />
      </g>
      <g shapeRendering="auto" strokeWidth="1.500">
        <path d="M91 901V880" stroke="#00a878" />
        <path d="M91 901 69 913" stroke="#2020e0" />
        <path d="M91 901l17 14" stroke="#e02020" />
        <circle cx="91" cy="901" r="3" fill="#888" />
      </g>
      <g className="font-['Liberation_Sans'] text-[9px]">
        <text x="86" y="878" fill="#00a878">Y</text>
        <text x="58" y="920" fill="#2020e0">Z</text>
        <text x="111" y="922" fill="#e02020">X</text>
      </g>
      <path
        d="M884.500 247.500v15l3.500-3 2.500 6 3-1.500-2.500-5.500h4z"
        fill="#fff"
        stroke="#113"
        shapeRendering="auto"
      />
    </svg>
  );
}

function Push({ children, disabled, className }: { children: ReactNode; disabled?: boolean; className: string }) {
  return (
    <button
      disabled={disabled}
      className={clsx(
        "h-[22px] shrink-0 border border-b-2 border-r-2 border-[#ccc] border-b-[#666] border-r-[#666] bg-white disabled:text-[#999]",
        className,
      )}
    >
      {children}
    </button>
  );
}

function Check({ label, checked }: { label: ReactNode; checked?: boolean }) {
  return (
    <label className="flex h-[22px] items-center gap-1 pl-[2px]">
      <span className="relative size-[15px] shrink-0">
        <input
          type="checkbox"
          defaultChecked={checked}
          className="peer block size-full appearance-none border border-[#ccc] border-l-black border-t-black bg-white"
        />
        <svg viewBox="0 0 15 15" className="pointer-events-none absolute inset-0 hidden peer-checked:block">
          <path d="M3 7l3.500 4L12 4" fill="none" stroke="#000" strokeWidth="2.200" />
        </svg>
      </span>
      <span>{label}</span>
    </label>
  );
}

function Pick({ label, value, className }: { label: string; value: string; className: string }) {
  return (
    <label className="flex items-center gap-[2px]">
      {label}
      <span className={clsx("relative h-4 shrink-0", className)}>
        <select className="block h-full w-full appearance-none border border-b-2 border-r-2 border-black bg-white pl-[11px] text-[10px] leading-none">
          <option>{value}</option>
        </select>
        <svg viewBox="0 0 8 8" className="pointer-events-none absolute right-[3px] top-1 size-2"><path d="M0 0h8L5 8H3z" /></svg>
      </span>
    </label>
  );
}

function Legend({ children }: { children: ReactNode }) {
  return (
    <div className="flex h-[14px] items-center gap-[2px]">
      <span className="h-px w-[10px] bg-black" />
      {children}
      <span className="mr-[2px] h-px flex-1 bg-black" />
    </div>
  );
}

function Recorder() {
  return (
    <section className="absolute right-0 top-[2px] w-[160px] rounded-[6px] border border-[#333] bg-[#99cccc] shadow-[0_4px_0_5px_rgba(100,100,100,.55)]">
      <div className="rounded-[5px] border border-white bg-linear-to-b from-[#ccc] from-25% via-[#ccccff] via-35% to-[#99cccc] to-50% px-[5px] pb-[5px]">
        <header className="flex h-[26px] items-start justify-between">
          <div className="flex items-center gap-[5px] pt-[3px] text-xs">
            <svg viewBox="0 0 16 14" className="h-[14px] w-4">
              <path d="M0 3h10V1h6v12H0z" fill="#222" />
              <path d="M1 4h10v3H1z" fill="#088" />
              <path d="M12 2v10M14.500 2v10" stroke="#fff" strokeDasharray="1 1" />
              <path d="M1 9h3v3H1zM5 8h3v4H5zM9 9h2v3H9z" fill="#fff" />
              <path d="M2 10h1v1H2zM6 9h1v2H6z" fill="#222" />
            </svg>
            Gi...
          </div>
          <div className="flex h-[18px] overflow-hidden rounded-b-[4px] border border-t-0 border-[#555]">
            <button aria-label="—" className="flex w-7 items-center justify-center border-r border-[#555] bg-linear-to-b from-[#ccc] from-50% to-[#999] to-50%">
              <span className="h-[4px] w-3 border border-[#555] bg-white" />
            </button>
            <button aria-label="□" className="flex w-[26px] items-center justify-center border-r border-[#555] bg-linear-to-b from-[#ccc] from-50% to-[#aaa] to-50%">
              <span className="h-2 w-[11px] border-2 border-[#888] bg-[#ccc]" />
            </button>
            <button aria-label="×" className="flex w-[47px] items-center justify-center bg-linear-to-b from-[#dd9988] from-50% to-[#bb2222] to-50%">
              <svg viewBox="0 0 11 10" className="h-[10px] w-[11px]">
                <path d="M1 0l9 10M10 0L1 10" stroke="#555" strokeWidth="4.500" />
                <path d="M1.500 .5l8 9M9.500 .5l-8 9" stroke="#fff" strokeWidth="2.600" />
              </svg>
            </button>
          </div>
        </header>
        <div className="border border-[#666] bg-white pb-[2px] font-['Liberation_Mono','Noto_Sans_CJK_SC',monospace] text-xs leading-[14px]">
          <nav className="flex h-[18px] items-center gap-[14px] border-b border-[#ccc] bg-linear-to-b from-white from-35% to-[#ccccff] to-35% pl-[6px]">
            <button>文件</button>
            <button className="text-[#888]">编辑</button>
          </nav>
          <div className="flex flex-col px-[2px]">
            <div className="mt-[5px] flex h-6 items-center justify-center border-y-3 border-double border-black text-[10px]">kukuasir</div>
            <div className="mt-[3px] flex gap-[2px]">
              <Push className="w-[43px]" disabled>开始</Push>
              <Push className="w-[43px]" disabled>抓取</Push>
              <Push className="w-[43px]">停止</Push>
            </div>
            <p className="mt-[2px] text-[10px]">
              0 <span className="text-xs">帧</span> (0 <span className="text-xs">字节</span>)
            </p>
            <div className="mt-[14px]"><Legend>捕捉区域</Legend></div>
            <dl className="grid grid-cols-[90px_1fr]">
              <dt>尺寸:</dt>
              <dd className="text-[10px]">1279x984</dd>
              <dt>左角顶点:</dt>
              <dd className="text-[10px]">0,0</dd>
            </dl>
            <div className="flex items-center justify-between">
              <Check label="显示区域" />
              <Push className="w-[67px]" disabled>选择区域</Push>
            </div>
            <Push className="mt-[3px] w-[67px]">刷新屏幕</Push>
            <div className="mt-5"><Legend>捕捉选项</Legend></div>
            <div className="mt-[1px]"><Pick label="最大帧频:" value="2 fps" className="w-[62px]" /></div>
            <div className="mt-[1px]">
              <Check label="帧间透明" checked />
              <Check label="记录时间信息" />
              <Check label="循环" checked />
              <Check label="覆盖边缘" checked />
              <Check label="覆盖指针" checked />
              <Check
                label={<span className="text-[10px]">Explorer 2.0 <span className="text-xs">兼容</span></span>}
                checked
              />
            </div>
            <div className="mt-[2px]"><Pick label="录制尺寸" value="100%" className="w-[50px]" /></div>
          </div>
        </div>
      </div>
    </section>
  );
}

function ImeBar() {
  return (
    <div className="absolute bottom-[24px] right-[15px] flex h-[26px] w-[131px] items-center justify-between bg-white px-[6px] text-[#666]">
      <svg viewBox="0 0 16 16" className="size-4" fill="#ff6633">
        <ellipse cx="2.200" cy="7" rx="1.900" ry="2.300" />
        <ellipse cx="5.600" cy="3" rx="1.900" ry="2.500" />
        <ellipse cx="10.400" cy="3" rx="1.900" ry="2.500" />
        <ellipse cx="13.800" cy="7" rx="1.900" ry="2.300" />
        <path d="M8 7c2 0 3 2.500 5 4s1 4.500-1.500 4.500S9.500 15 8 15s-1 .5-3.500.5S1 12.500 3 11s3-4 5-4z" />
      </svg>
      <span className="text-base font-bold leading-none">五</span>
      <svg viewBox="0 0 16 16" className="size-4"><path d="M10 2c6 4 3 13-4 13-3 0-5-1-5.500-3C8 12 11 8 10 2z" fill="#666" /></svg>
      <svg viewBox="0 0 16 16" className="size-4">
        <circle cx="4.500" cy="5" r="2.200" fill="none" stroke="#666" strokeWidth="1.500" />
        <path d="M9 10a2.200 2.200 0 1 1 4 1c0 2-1 3-3 3.500l-.5-1c1-.3 1.500-1 1.500-1.500-1 0-2-1-2-2z" fill="#666" />
      </svg>
      <svg viewBox="0 0 16 16" className="size-4" fill="none" stroke="#666">
        <circle cx="8" cy="8" r="4.800" strokeWidth="3" />
        <circle cx="8" cy="8" r="7" strokeWidth="1.800" strokeDasharray="2.750 2.750" />
      </svg>
    </div>
  );
}

const tabs = [["t1", "t2", "t3"], ["t4"], ["t5"], ["t6", "t7", "t8", "t9", "t10", "t11"]];

export default function App() {
  return (
    <div className="relative flex min-h-screen w-full flex-col overflow-hidden border border-black bg-[#ccc] font-['Noto_Sans','Noto_Sans_CJK_SC',sans-serif] text-xs leading-4 text-black">
      <header className="flex h-[21px] items-center gap-1 border-b border-black bg-linear-to-b from-[#666] from-35% to-[#333] to-35% pl-[2px] text-[13px] text-[#666]">
        <Icon name="nx" />
        <h1>NX 7 - 建模 - [model5.prt （修改的）]</h1>
      </header>
      <nav className="flex h-[27px] items-center border-t border-white pb-[2px]">
        <Grip />
        <Icon name="part" />
        <div className="flex gap-3 pl-[6px]">
          {menus.map(([label, key]) => (
            <button key={key}>
              {label}(<u>{key}</u>)
            </button>
          ))}
        </div>
      </nav>
      <div className="flex h-[27px] overflow-hidden border-t border-white">
        <Group className="w-[357px] pb-[2px]" items="start v fresh open save | cut copy paste | undo redo | find swap | info ." />
        <Group
          className="w-[450px] border-l border-white pb-[2px]"
          items="fit blank zoomArea zoomIn rotate pan persp | cube v *shade section hex v layer v white v | door1 door2 door3 ."
        />
        <div className="flex w-[186px] shrink-0 items-center justify-between border-l border-white pb-[2px] pr-[2px]">
          <Group items="*csys1 csys2 csys3 | trimX ruler angle" />
          <Tool item=">" />
        </div>
        <Group className="border-l border-white pb-[2px]" items="mv1 mv2 mv3 mv4 mv5" />
      </div>
      <div className="flex h-7 overflow-hidden border-b-2 border-t border-b-[#999] border-t-white">
        <Group className="w-[223px] pb-[2px]" items="sketch | extrude revolve sweep tube | offset1 offset2 | solid >" />
        <Group
          className="w-[265px] border-l border-white pb-[2px]"
          items="datum v plane v | edgeBlend draft chamfer book sew hole | sheet >"
        />
        <Group className="w-[144px] border-l border-white pb-[2px]" items="surf1 surf2 surf3 | surf4 bend ." />
        <Group
          className="w-[259px] border-l border-white pb-[2px]"
          items="cam1 cam2 curve | offsetCurve spl1 spl2 v spl3 spl4 project v ."
        />
        <Group
          className="border-l border-white pb-[2px]"
          items="burst ring burst drum torus1 worm torus2 gearBlue gearLine balls"
        />
      </div>
      <div className="flex h-[29px] items-center pb-[2px] pl-1">
        <Combo label="过滤器" value="没有选择过滤器" className="w-[143px]" />
        <Combo label="范围" value="整个装配" className="ml-2 w-[152px]" />
        <div className="ml-[3px] flex items-center">
          {"ghost | snap , back house rot1 rot2 | marquee v | block".split(" ").map((item, i) => (
            <Tool key={i} item={item} />
          ))}
        </div>
      </div>
      <div className="flex h-[21px] items-center border-t border-white pl-[2px] text-[13px] font-bold">
        <p className="flex h-full w-[599px] items-center border-r border-white">选择对象并使用 MB3，或者双击某一对象</p>
      </div>
      <div className="flex h-[23px] border-t border-[#999]">
        <div className="flex w-[113px] border-b border-r border-[#666] bg-linear-to-b from-[#666] from-40% to-[#333] to-40%">
          <button aria-label="<" className="flex w-[21px] items-center justify-center bg-[#eee]">
            <svg viewBox="0 0 10 10" className="size-[10px]" fill="none" stroke="#666" strokeWidth="2.600"><path d="M9 1 2 5l7 4" /></svg>
          </button>
          <span className="flex-1" />
          <button aria-label=">" className="flex w-[19px] items-center justify-center bg-[#eee]">
            <svg viewBox="0 0 10 10" className="size-[10px]" fill="none" stroke="#666" strokeWidth="2.600"><path d="M1 1l7 4-7 4" /></svg>
          </button>
        </div>
        <div className="flex-1">
          <div className="h-[6px] border-b-2 border-[#999]" />
          <div className="h-[3px] border-b border-white" />
          <div className="h-[6px] border-b border-[#999]" />
          <div className="h-px bg-[#666]" />
        </div>
      </div>
      <main className="flex flex-1">
        <aside className="flex w-[27px] flex-col gap-3 bg-[#999] pl-[5px] pt-[9px]">
          {tabs.map((group) => (
            <div key={group[0]}>
              {group.map((name) => (
                <button
                  key={name}
                  className="flex h-[34px] w-[22px] items-center justify-center rounded-l-[4px] border border-r-0 border-[#666] bg-[#ccc] shadow-[inset_1px_1px_0_#eee]"
                >
                  <Icon name={name} />
                </button>
              ))}
            </div>
          ))}
        </aside>
        <div className="w-2 border-r-2 border-[#666] bg-white" />
        <div className="relative flex-1">
          <Model />
        </div>
        <aside className="flex w-[25px] flex-col items-center border-l-2 border-white pt-[257px]">
          {"r1 r2 | r3 r4 r5 r6 | r7 r8 r9".split(" ").map((name, i) =>
            name === "|" ? (
              <span key={i} className="my-[2px] h-px w-full bg-white" />
            ) : (
              <button key={i} className="flex h-[23px] items-center">
                <Icon name={name} />
              </button>
            ),
          )}
          <svg viewBox="0 0 3 5" className="mr-3 mt-[6px] h-[5px] w-[3px]"><path d="M3 0v5L0 2.500z" /></svg>
        </aside>
      </main>
      <footer className="h-[26px] border-t-2 border-white">
        <Group
          className="h-full"
          items="a1 a2 a3 a4 a5 a6 | b1 b2 b3 b4 b5 b6 b7 b8 b9 b10 b11 b12 | c1 c2 | d1 d2 d3 d4 d5 d6 | e1 ."
        />
      </footer>
      <ImeBar />
      <Recorder />
    </div>
  );
}
